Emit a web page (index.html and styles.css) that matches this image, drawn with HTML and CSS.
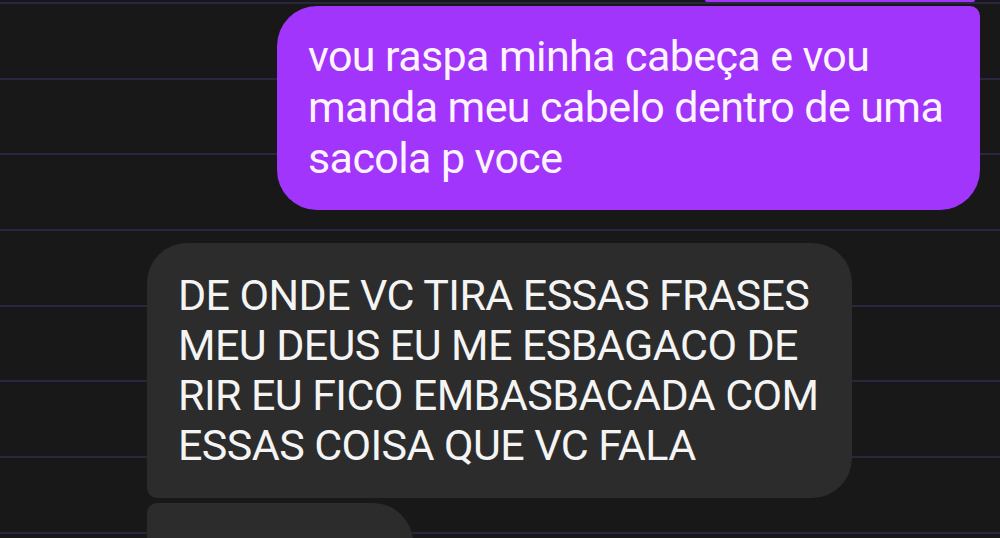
FILE: index.html
```html
<!DOCTYPE html>
<html lang="pt-BR">
<head>
    <meta charset="UTF-8">
    <meta name="viewport" content="width=device-width, initial-scale=1.0">
    <title>Conversa</title>
    <link rel="stylesheet" href="styles.css">
</head>
<body>
    <div class="chat">
        <div class="bubble sent stub"></div>
        <div class="bubble sent main">vou raspa minha cabeça e vou manda meu cabelo dentro de uma sacola p voce</div>
        <div class="bubble received main">DE ONDE VC TIRA ESSAS FRASES MEU DEUS EU ME ESBAGACO DE RIR EU FICO EMBASBACADA COM ESSAS COISA QUE VC FALA</div>
        <div class="bubble received next">eu vou mesmo é</div>
    </div>
</body>
</html>
```

FILE: styles.css
```css
body {
    margin: 0;
    height: 538px;
    overflow: hidden;
    font-family: Roboto, "Noto Sans", Arial, sans-serif;
    background-color: #181818;
    background-image: repeating-linear-gradient(to bottom, #2a2640 0, #2a2640 2px, transparent 2px, transparent 75.7px);
    background-position: 0 2px;
}

.chat {
    display: flex;
    flex-direction: column;
    align-items: flex-start;
    padding: 0 20px 0 147px;
}

.bubble {
    box-sizing: border-box;
    font-size: 43px;
    letter-spacing: -0.6px;
    line-height: 50px;
}

.sent {
    align-self: flex-end;
    background: #a235fb;
    color: #fdf4ff;
}

.received {
    background: #2c2c2c;
    color: #f4f4f4;
}

.stub {
    width: 270px;
    height: 2px;
    margin-right: 5px;
    border-radius: 0 0 8px 8px;
}

.sent.main {
    width: 703px;
    margin-top: 4px;
    padding: 25px 30px 26px 31px;
    line-height: 51px;
    border-radius: 40px 10px 40px 40px;
}

.received.main {
    width: 705px;
    margin-top: 33px;
    padding: 27px 30px 28px 31px;
    border-radius: 40px 40px 40px 10px;
}

.received.next {
    width: 266px;
    margin-top: 5px;
    padding: 24px 30px 27px 31px;
    border-radius: 10px 40px 40px 10px;
}
```
